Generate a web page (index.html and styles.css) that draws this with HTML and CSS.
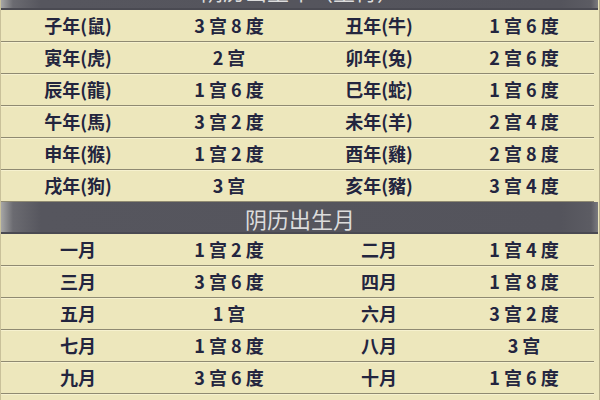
FILE: index.html
```html
<!DOCTYPE html>
<html lang="zh">
<head>
<meta charset="utf-8">
<link rel="stylesheet" href="styles.css">
</head>
<body>
<div class="sheet">
  <div class="head head-first">阴历出生年（生肖）</div>
  <div class="row"><span>子年(鼠)</span><span>3 宫 8 度</span><span>丑年(牛)</span><span>1 宫 6 度</span></div>
  <div class="row"><span>寅年(虎)</span><span>2 宫</span><span>卯年(兔)</span><span>2 宫 6 度</span></div>
  <div class="row"><span>辰年(龍)</span><span>1 宫 6 度</span><span>巳年(蛇)</span><span>1 宫 6 度</span></div>
  <div class="row"><span>午年(馬)</span><span>3 宫 2 度</span><span>未年(羊)</span><span>2 宫 4 度</span></div>
  <div class="row"><span>申年(猴)</span><span>1 宫 2 度</span><span>酉年(雞)</span><span>2 宫 8 度</span></div>
  <div class="row"><span>戌年(狗)</span><span>3 宫</span><span>亥年(豬)</span><span>3 宫 4 度</span></div>
  <div class="head">阴历出生月</div>
  <div class="row"><span>一月</span><span>1 宫 2 度</span><span>二月</span><span>1 宫 4 度</span></div>
  <div class="row"><span>三月</span><span>3 宫 6 度</span><span>四月</span><span>1 宫 8 度</span></div>
  <div class="row"><span>五月</span><span>1 宫</span><span>六月</span><span>3 宫 2 度</span></div>
  <div class="row"><span>七月</span><span>1 宫 8 度</span><span>八月</span><span>3 宫</span></div>
  <div class="row"><span>九月</span><span>3 宫 6 度</span><span>十月</span><span>1 宫 6 度</span></div>
  <div class="row"><span>十一月</span><span>2 宫 6 度</span><span>十二月</span><span>3 宫</span></div>
</div>
</body>
</html>
```

FILE: styles.css
```css
html, body {
  margin: 0;
  padding: 0;
  background: #ece6bb;
  overflow: hidden;
}
.sheet {
  width: 600px;
  height: 400px;
  box-sizing: border-box;
  padding: 0 5px 0 3px;
  background: #ede7bc;
  overflow: hidden;
  border-left: 1px solid #c9c19a;
  border-right: 1px solid #b8b08c;
}
.head {
  height: 32px;
  line-height: 32px;
  text-align: center;
  color: #dcdcdc;
  font-family: "Noto Sans CJK SC", "Noto Sans", sans-serif;
  font-size: 22px;
  font-weight: 400;
  background: linear-gradient(to right, #a6a6a6 0px, #6b6b71 12px, #56565e 40px, #54545c 560px, #5c5c63 590px, #7a7a7e 100%);
  box-shadow: inset 0 -2px 0 #4a4a52;
  margin: 0 -4px 0 -3px;
  padding-left: 1px;
}
.head-first {
  margin-top: -22px;
  height: 32px;
  line-height: 24px;
}
.row {
  display: grid;
  grid-template-columns: 150px 150px 150px 142px;
  height: 31px;
  align-items: center;
  border-bottom: 1px solid #8f8a72;
  box-shadow: 0 1px 0 #f6f1cf;
  font-family: "Noto Sans CJK SC", "Noto Sans", sans-serif;
  font-size: 18px;
  font-weight: 700;
  color: #23253f;
  margin-left: -3px;
  padding-left: 3px;
}
.row span {
  text-align: center;
  line-height: 31px;
}
.row span:nth-child(1) {
  transform: translateX(-1px);
}
.row span:nth-child(4) {
  transform: translateX(-1px);
}
```
